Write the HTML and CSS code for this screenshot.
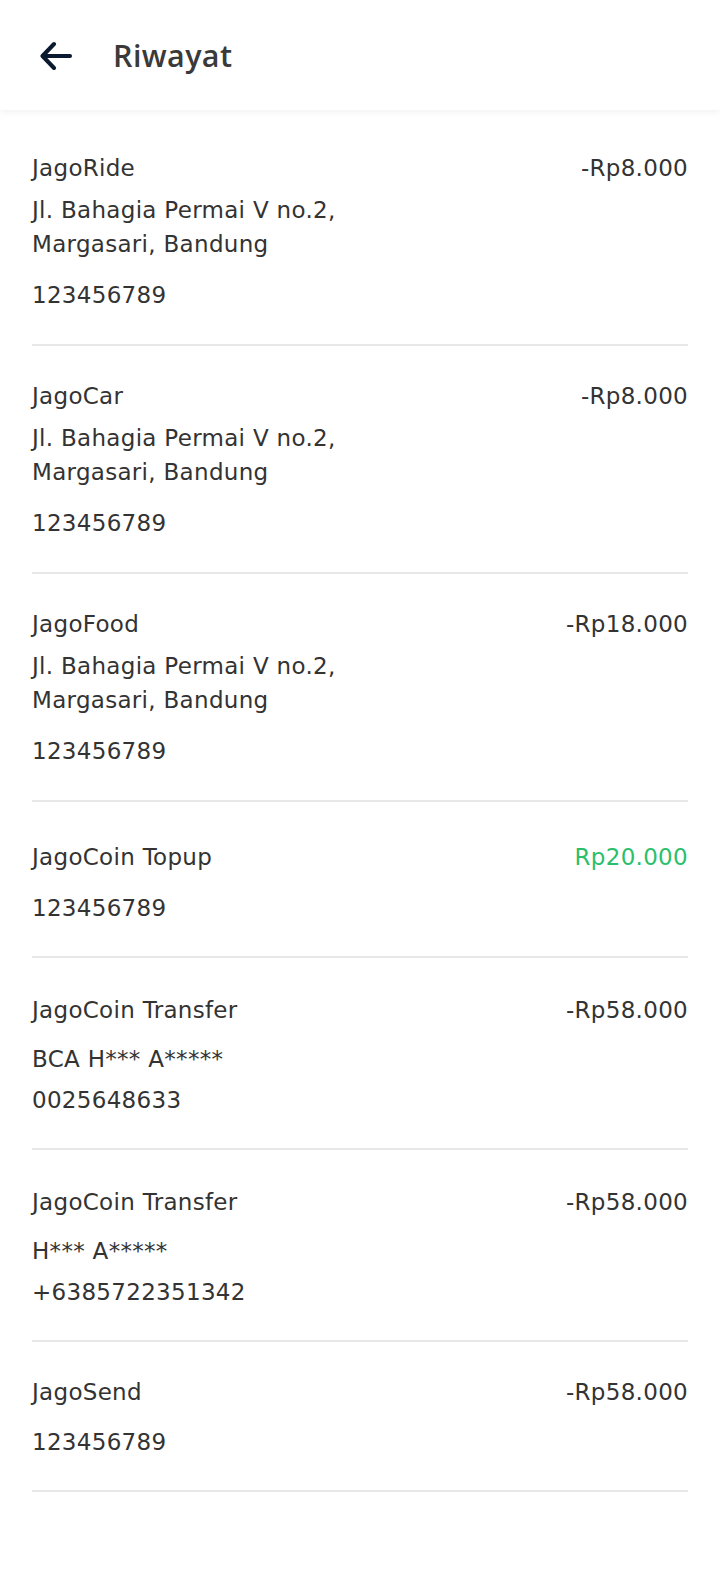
FILE: index.html
```html
<!DOCTYPE html>
<html lang="id">
<head>
<meta charset="utf-8">
<title>Riwayat</title>
<link rel="stylesheet" href="styles.css">
</head>
<body>
<header class="appbar">
  <button class="back" aria-label="Kembali">
    <svg width="32" height="32" viewBox="0 0 32 32" fill="none" stroke="#0b1a30" stroke-width="4" stroke-linecap="round" stroke-linejoin="round">
      <path d="M30 16H3"/>
      <path d="M14 4L2.5 16L14 28"/>
    </svg>
  </button>
  <h1 class="appbar-title">Riwayat</h1>
</header>

<main class="list">
  <div class="item">
    <div class="top"><span class="name">JagoRide</span><span class="amount">-Rp8.000</span></div>
    <div class="address">Jl. Bahagia Permai V no.2, Margasari, Bandung</div>
    <div class="code">123456789</div>
  </div>
  <div class="item">
    <div class="top"><span class="name">JagoCar</span><span class="amount">-Rp8.000</span></div>
    <div class="address">Jl. Bahagia Permai V no.2, Margasari, Bandung</div>
    <div class="code">123456789</div>
  </div>
  <div class="item">
    <div class="top"><span class="name">JagoFood</span><span class="amount">-Rp18.000</span></div>
    <div class="address">Jl. Bahagia Permai V no.2, Margasari, Bandung</div>
    <div class="code">123456789</div>
  </div>
  <div class="item item-topup">
    <div class="top"><span class="name">JagoCoin Topup</span><span class="amount plus">Rp20.000</span></div>
    <div class="code">123456789</div>
  </div>
  <div class="item item-transfer">
    <div class="top"><span class="name">JagoCoin Transfer</span><span class="amount">-Rp58.000</span></div>
    <div class="account">BCA H*** A*****</div>
    <div class="acc-no">0025648633</div>
  </div>
  <div class="item item-transfer">
    <div class="top"><span class="name">JagoCoin Transfer</span><span class="amount">-Rp58.000</span></div>
    <div class="account">H*** A*****</div>
    <div class="acc-no">+6385722351342</div>
  </div>
  <div class="item item-send">
    <div class="top"><span class="name">JagoSend</span><span class="amount">-Rp58.000</span></div>
    <div class="code">123456789</div>
  </div>
</main>
</body>
</html>
```

FILE: styles.css
```css
* {
  box-sizing: border-box;
}

html, body {
  margin: 0;
  padding: 0;
  background: #ffffff;
}

body {
  width: 720px;
  min-height: 1588px;
  font-family: "DejaVu Sans", "Noto Sans", sans-serif;
  font-size: 23px;
  letter-spacing: 0.3px;
  color: #333333;
}

.appbar {
  position: relative;
  z-index: 2;
  height: 110px;
  display: flex;
  align-items: center;
  padding-left: 40px;
  background: #ffffff;
  box-shadow: 0 2px 7px rgba(0, 0, 0, 0.06);
}

.back {
  width: 32px;
  height: 32px;
  padding: 0;
  margin: 2px 0 0 0;
  border: 0;
  background: transparent;
  display: flex;
}

.appbar-title {
  margin: 0 0 0 41px;
  font-family: "Open Sans", "DejaVu Sans", sans-serif;
  font-weight: 600;
  font-size: 30.5px;
  letter-spacing: 0.4px;
  color: #3a3a3a;
  line-height: 40px;
}

.list {
  padding: 8px 32px 0;
}

.item {
  padding: 33px 0 32px;
  border-bottom: 2px solid #e8e8e8;
  line-height: 34px;
}

.top {
  display: flex;
  justify-content: space-between;
  align-items: baseline;
}

.amount {
  color: #333333;
}

.amount.plus {
  color: #2cbf6b;
}

.address {
  margin-top: 8px;
  max-width: 340px;
}

.code {
  margin-top: 17px;
}

.item-topup {
  padding-top: 38px;
  padding-bottom: 31px;
}

.item-transfer {
  padding-top: 35px;
  padding-bottom: 31px;
}

.account {
  margin-top: 15px;
}

.acc-no {
  margin-top: 7px;
}

.item-send {
  padding-top: 33px;
  padding-bottom: 31px;
}

.item-send .code {
  margin-top: 16px;
}
```
